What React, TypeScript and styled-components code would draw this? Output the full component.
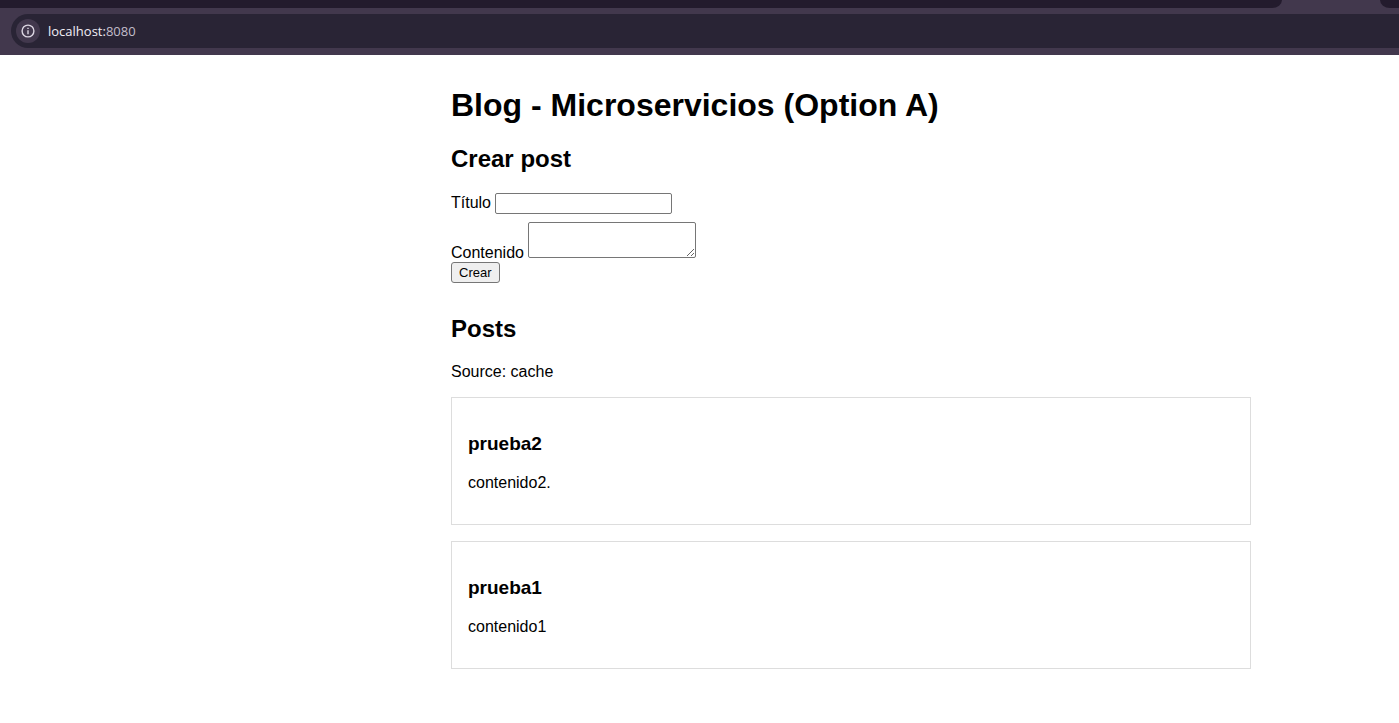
import React from "react";
import styled, { createGlobalStyle } from "styled-components";

const GlobalStyle = createGlobalStyle`
  body {
    margin: 0;
    background: #fff;
    color: #000;
    font-family: Arial, "Liberation Sans", sans-serif;
    font-size: 16px;
    line-height: 18px;
  }
`;

const BrowserBar = styled.header`
  background: #42384d;
  height: 55px;
  overflow: hidden;
`;

const TabStrip = styled.div`
  display: flex;
  justify-content: space-between;
  height: 8px;
  margin-bottom: 6px;
`;

const TabsBefore = styled.div`
  flex: 1;
  margin-right: 98px;
  background: #231b2d;
  border-bottom-right-radius: 10px 8px;
`;

const TabsAfter = styled.div`
  width: 19px;
  background: #231b2d;
  border-bottom-left-radius: 10px 8px;
`;

const AddressBar = styled.div`
  display: flex;
  align-items: center;
  gap: 8px;
  height: 34px;
  margin-left: 11px;
  padding-left: 5px;
  border-radius: 17px 0 0 17px;
  background: #292435;
`;

const SiteInfoButton = styled.button`
  display: flex;
  align-items: center;
  justify-content: center;
  width: 24px;
  height: 24px;
  padding: 0;
  border: 0;
  border-radius: 50%;
  background: #42384d;
  color: #dcd6e2;
`;

const Url = styled.span`
  color: #f1eef5;
  font-family: "Segoe UI", "Open Sans", sans-serif;
  font-size: 13px;
`;

const Port = styled.span`
  color: #c3bdcb;
`;

const Page = styled.main`
  display: grid;
  grid-template-columns: 451fr minmax(auto, 800px) 148fr;
  padding: 32px 0;
`;

const Content = styled.div`
  grid-column: 2;
`;

const Title = styled.h1`
  margin: 0 0 21px;
  font-size: 32px;
  line-height: 37px;
`;

const SectionTitle = styled.h2`
  margin: 0 0 20px;
  font-size: 24px;
  line-height: 28px;
`;

const PostForm = styled.form`
  margin-bottom: 32px;
`;

const Field = styled.div`
  & + & {
    margin-top: 8px;
  }
`;

const TextInput = styled.input`
  box-sizing: border-box;
  width: 177px;
  height: 21px;
  margin: 0;
  padding: 1px 2px;
  border: 1px solid #767676;
  border-radius: 2px;
  font: 13px Arial, "Liberation Sans", sans-serif;
`;

const TextArea = styled.textarea`
  box-sizing: border-box;
  width: 168px;
  height: 36px;
  margin: 0;
  padding: 2px;
  border: 1px solid #767676;
  border-radius: 2px;
  font: 13px "Liberation Mono", monospace;
  overflow: auto;
  vertical-align: baseline;
`;

const SubmitButton = styled.button`
  display: block;
  height: 21px;
  padding: 0 7px;
  border: 1px solid #767676;
  border-radius: 3px;
  background: #efefef;
  color: #000;
  font: 13px Arial, "Liberation Sans", sans-serif;
`;

const Source = styled.p`
  margin: 0 0 16px;
`;

const PostCard = styled.article`
  margin-bottom: 16px;
  padding: 35px 16px 32px;
  border: 1px solid #ddd;
`;

const PostTitle = styled.h3`
  margin: 0 0 20px;
  font-size: 19px;
  line-height: 21px;
`;

const PostBody = styled.p`
  margin: 0;
`;

const posts = [
  { title: "prueba2", body: "contenido2." },
  { title: "prueba1", body: "contenido1" },
];

function InfoIcon() {
  return (
    <svg width="14" height="14" viewBox="0 0 14 14" fill="none" aria-hidden="true">
      <circle cx="7" cy="7" r="5.9" stroke="currentColor" strokeWidth="1.4" />
      <path d="M7 6.3v3.9" stroke="currentColor" strokeWidth="1.4" />
      <path d="M7 3.7v1.4" stroke="currentColor" strokeWidth="1.4" />
    </svg>
  );
}

export default function App() {
  return (
    <>
      <GlobalStyle />
      <BrowserBar>
        <TabStrip>
          <TabsBefore />
          <TabsAfter />
        </TabStrip>
        <AddressBar>
          <SiteInfoButton type="button" aria-label="Site information">
            <InfoIcon />
          </SiteInfoButton>
          <Url>
            localhost:<Port>8080</Port>
          </Url>
        </AddressBar>
      </BrowserBar>
      <Page>
        <Content>
          <Title>Blog - Microservicios (Option A)</Title>
          <SectionTitle>Crear post</SectionTitle>
          <PostForm onSubmit={(e) => e.preventDefault()}>
            <Field>
              <label htmlFor="title">Título</label>{" "}
              <TextInput id="title" type="text" />
            </Field>
            <Field>
              <label htmlFor="content">Contenido</label>{" "}
              <TextArea id="content" />
            </Field>
            <SubmitButton type="submit">Crear</SubmitButton>
          </PostForm>
          <SectionTitle>Posts</SectionTitle>
          <Source>Source: cache</Source>
          {posts.map((post) => (
            <PostCard key={post.title}>
              <PostTitle>{post.title}</PostTitle>
              <PostBody>{post.body}</PostBody>
            </PostCard>
          ))}
        </Content>
      </Page>
    </>
  );
}
